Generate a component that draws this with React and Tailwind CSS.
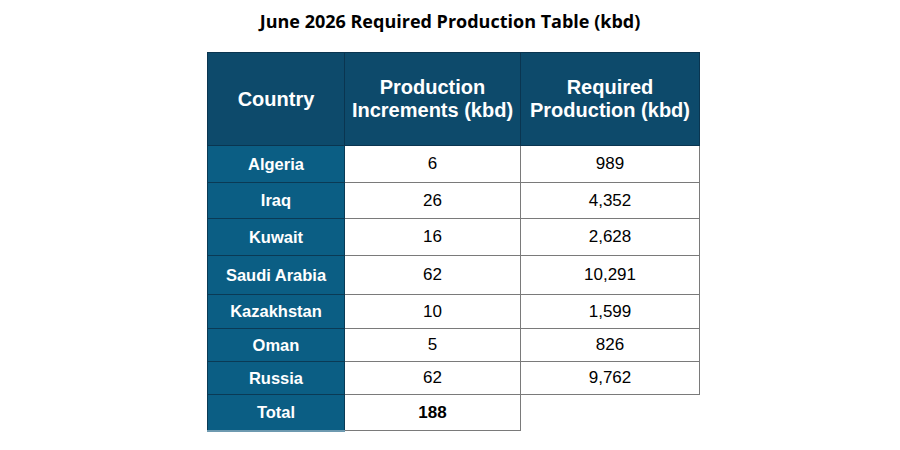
const rows = [
  { country: "Algeria", inc: "6", req: "989", h: "h-[37px]" },
  { country: "Iraq", inc: "26", req: "4,352", h: "h-[36px]" },
  { country: "Kuwait", inc: "16", req: "2,628", h: "h-[37px]" },
  { country: "Saudi Arabia", inc: "62", req: "10,291", h: "h-[39px]" },
  { country: "Kazakhstan", inc: "10", req: "1,599", h: "h-[34px]" },
  { country: "Oman", inc: "5", req: "826", h: "h-[33px]" },
  { country: "Russia", inc: "62", req: "9,762", h: "h-[33px]" },
];

export default function App() {
  return (
    <div className="w-[900px] h-[450px] bg-white overflow-hidden font-['Liberation_Sans',Arial,sans-serif]">
      <h1 className="pt-[9px] h-[52px] text-center text-[18px] font-bold text-black font-['Open_Sans','Liberation_Sans',sans-serif] leading-[24px]">
        June 2026 Required Production Table (kbd)
      </h1>
      <table className="ml-[207px] border-collapse table-fixed">
        <thead>
          <tr className="h-[93px] bg-[#0d4a6b] text-white text-[20px] font-bold leading-[23px]">
            <th className="w-[137px] border border-[#0a3550]">Country</th>
            <th className="w-[176px] border border-[#0a3550]">
              Production
              <br />
              Increments (kbd)
            </th>
            <th className="w-[179px] border border-[#0a3550]">
              Required
              <br />
              Production (kbd)
            </th>
          </tr>
        </thead>
        <tbody>
          {rows.map((r) => (
            <tr key={r.country} className={r.h}>
              <td className="bg-[#0b5e84] text-white font-bold text-[16.5px] text-center border border-[#0a3a55]">
                {r.country}
              </td>
              <td className="text-center text-[17px] text-black border border-[#7a7a7a]">{r.inc}</td>
              <td className="text-center text-[17px] text-black border border-[#7a7a7a]">{r.req}</td>
            </tr>
          ))}
          <tr className="h-[36px]">
            <td className="bg-[#0b5e84] text-white font-bold text-[16.5px] text-center border border-[#0a3a55] border-b-[#6e9ab0] border-b-2">
              Total
            </td>
            <td className="text-center text-[17px] font-bold text-black border border-[#7a7a7a]">188</td>
            <td></td>
          </tr>
        </tbody>
      </table>
    </div>
  );
}
